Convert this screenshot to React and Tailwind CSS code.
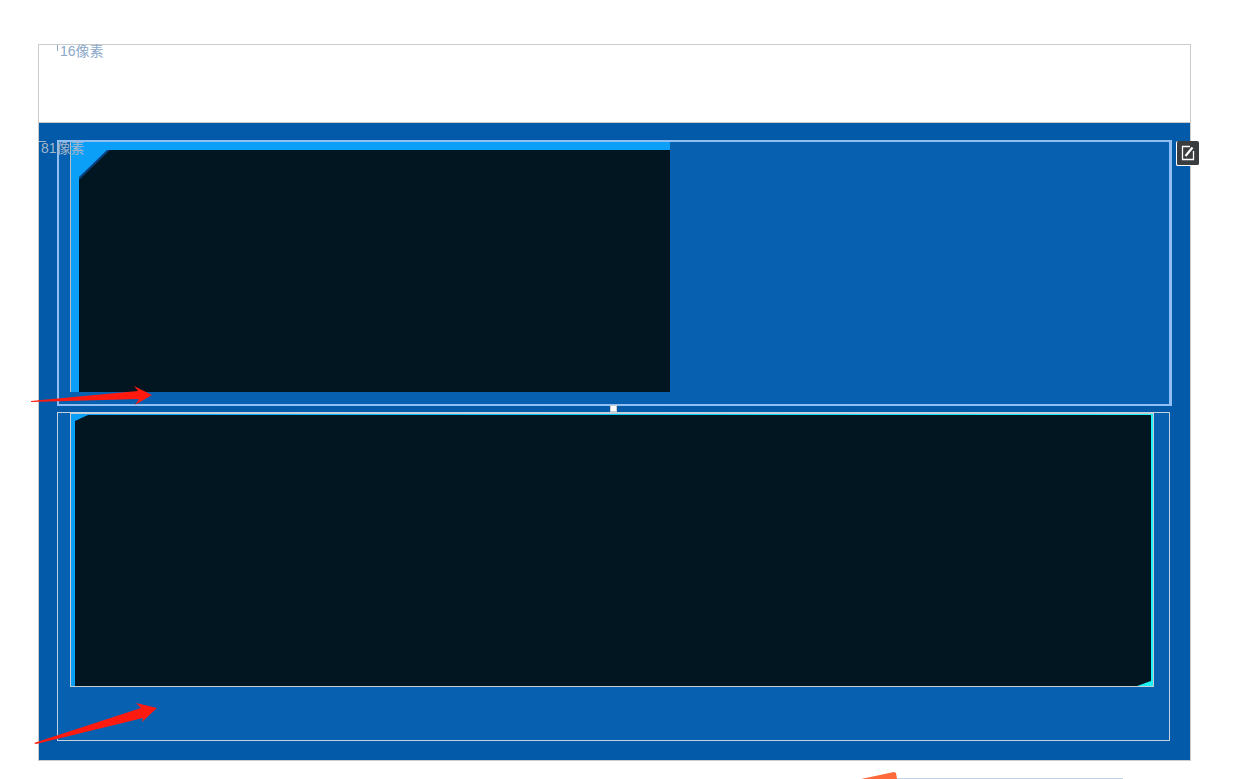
import React from "react";

export default function App() {
  return (
    <div className="relative h-[779px] w-[1252px] overflow-hidden bg-white pl-[38px] pt-[44px] font-['Liberation_Sans','Noto_Sans_CJK_SC',sans-serif]">
      <div className="w-[1153px] border border-[#cccccc]">
        <div className="flex h-[77px] items-start gap-[2px] bg-white pl-[18px] text-[14px] leading-[12px] text-[#8ca8c8]">
          <span className="h-[6px] w-px bg-[#8ca8c8]" />
          <span>16像素</span>
        </div>
        <div className="relative h-[638px] border-t border-[#cccccc] bg-[#025aa8] pl-[18px] pt-[17px]">
          <span className="absolute left-[2px] top-[18px] text-[14px] leading-[14px] text-[#a3b6ca]">81像素</span>
          <span className="absolute left-0 top-[18px] h-px w-[7px] bg-[#a3b6ca]" />

          <div className="h-[266px] w-[1115px] border-2 border-r-[3px] border-[#90bff3] bg-[#0761b0] pl-[11px]">
            <div className="h-[250px] w-[600px] border-l border-[#b4bcc4] bg-[#0b9ff8] pl-[8px] pt-[8px]">
              <div className="h-[242px] w-[591px] bg-[#0b3f7c] [clip-path:polygon(28px_0,100%_0,100%_100%,0_100%,0_27px)]">
                <div className="h-full w-full bg-[#021622] [clip-path:polygon(31px_0,100%_0,100%_100%,0_100%,0_30px)]" />
              </div>
            </div>
          </div>

          <div className="mt-[6px] h-[329px] w-[1113px] border border-[#c4d2e0] bg-[#0761b0] pl-[12px]">
            <div className="h-[274px] w-[1084px] border-x border-b border-t border-[#c4ccd4] bg-gradient-to-r from-[#0b9ff8] to-[#1ef2f4] pl-[4px] pr-[2px] pt-px">
              <div className="h-[271px] w-[1076px] bg-[#021622] [clip-path:polygon(13px_0,100%_0,100%_266px,1062px_100%,0_100%,0_6px)]" />
            </div>
          </div>

          <span className="absolute left-[571px] top-[282px] h-[7px] w-[7px] border border-[#c8ccd0] bg-white" />
        </div>
      </div>

      <div className="ml-[859px] mt-[17px] h-px w-[226px] bg-[#c0d4e8]" />

      <button className="absolute left-[1176px] top-[141px] flex h-[25px] w-[23px] items-center justify-center rounded-[2px] border-b border-l border-white bg-[#3a3d40]">
        <svg width="22" height="24" viewBox="0 0 22 24" fill="none">
          <path d="M13 5.5H5.5V18.5H16.5V10" stroke="#ffffff" strokeWidth="1.3" />
          <path d="M8.5 15L15.5 6.5" stroke="#ffffff" strokeWidth="2.2" />
        </svg>
      </button>

      <svg className="pointer-events-none absolute left-0 top-0" width="1252" height="779">
        <polygon points="31,401 138,391 134,386 152,395 135,405 139,399 31,402" fill="#ff1a10" />
        <polygon points="34,743 141,708 136,703 157,708 142,722 143,718 36,744" fill="#ff1a10" />
        <polygon points="861,779 894,772 896,773 897,779" fill="#ff6a3a" />
      </svg>
    </div>
  );
}
